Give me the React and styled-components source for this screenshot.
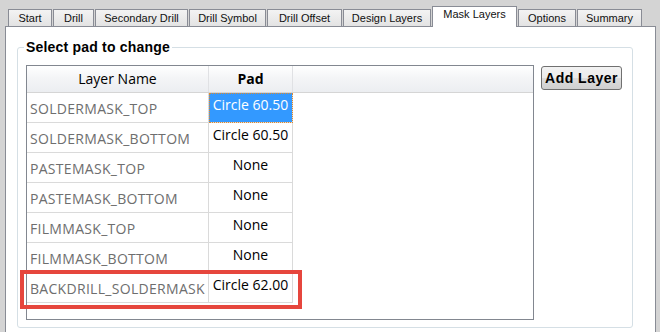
import styled, { createGlobalStyle } from 'styled-components';

const GlobalStyle = createGlobalStyle`
    html, body {
        margin: 0;
        padding: 0;
        background: #d4d4d4;
        overflow: hidden;
    }
`

const Window = styled.div`
    width: 660px;
    height: 332px;
    padding-top: 6px;
    box-sizing: border-box;
    font-family: "Liberation Sans", Arial, sans-serif;
`

const TabBar = styled.div`
    position: relative;
    z-index: 1;
    display: flex;
    align-items: flex-end;
    gap: 1px;
    height: 21px;
    padding-left: 8px;
`

const Tab = styled.div`
    box-sizing: border-box;
    width: ${props => props.w}px;
    height: ${props => props.active ? 21 : 17}px;
    margin-bottom: ${props => props.active ? 0 : 1}px;
    border: 1px solid #898c95;
    border-bottom: none;
    background: ${props => props.active ? '#ffffff' : 'linear-gradient(#f3f3f3, #e3e3e3)'};
    color: #111;
    font-size: 11px;
    text-align: center;
    line-height: ${props => props.active ? 15 : 16}px;
    white-space: nowrap;
`

const Panel = styled.div`
    box-sizing: border-box;
    margin: -1px 0 0 5px;
    width: 651px;
    height: 320px;
    border: 1px solid #898c95;
    background: #fff;
    padding: 11px 0 0 11px;
`

const Group = styled.fieldset`
    box-sizing: border-box;
    margin: 0;
    width: 616px;
    height: 290px;
    border: 1px solid #d5dfe5;
    border-radius: 3px;
    padding: 9px 0 0 8px;
`

const Title = styled.legend`
    padding: 0 2px;
    margin-left: -2px;
    font-size: 14px;
    letter-spacing: 0.2px;
    line-height: 18px;
    font-weight: bold;
    color: #000;
`

const Content = styled.div`
    display: flex;
    align-items: flex-start;
    gap: 7px;
`

const Table = styled.div`
    box-sizing: border-box;
    width: 508px;
    height: 255px;
    border: 1px solid #828790;
    font-family: "Open Sans", sans-serif;
    font-size: 14px;
`

const HeadRow = styled.div`
    display: flex;
    height: 27px;
    box-sizing: border-box;
    border-bottom: 1px solid #d5d5d5;
    background: linear-gradient(#ffffff, #f4f5f7 45%, #eceef1);
`

const HeadCell = styled.div`
    box-sizing: border-box;
    width: ${props => props.w}px;
    border-right: 1px solid #e0e1e4;
    text-align: center;
    line-height: 25px;
    font-weight: ${props => props.bold ? 700 : 400};
    color: #000;
`

const Row = styled.div`
    position: relative;
    display: flex;
    height: 30px;
`

const NameCell = styled.div`
    box-sizing: border-box;
    width: 182px;
    border-right: 1px solid #dadada;
    border-bottom: 1px solid #dadada;
    padding: 2px 0 0 3px;
    line-height: 27px;
    letter-spacing: 0.3px;
    color: #6e6e6e;
    white-space: nowrap;
    overflow: hidden;
`

const PadCell = styled.div`
    box-sizing: border-box;
    width: 84px;
    border-right: 1px solid #dadada;
    border-bottom: 1px solid #dadada;
    padding-top: 2px;
    line-height: 19px;
    text-align: center;
    white-space: nowrap;
    color: ${props => props.selected ? '#fff' : '#000'};
    background: ${props => props.selected ? '#3399ff' : 'transparent'};
    outline: ${props => props.selected ? '1px dotted #e08a2c' : 'none'};
    outline-offset: -1px;
`

const Highlight = styled.div`
    position: absolute;
    left: -7px;
    top: -3px;
    width: 282px;
    height: 39px;
    box-sizing: border-box;
    border: 4px solid #e6463d;
    pointer-events: none;
`

const Button = styled.button`
    box-sizing: border-box;
    margin-top: 1px;
    width: 81px;
    height: 24px;
    padding: 0;
    border: 1px solid #707070;
    border-radius: 3px;
    background: linear-gradient(#f2f2f2, #ebebeb 50%, #dddddd 51%, #cfcfcf);
    font-family: "Liberation Sans", Arial, sans-serif;
    font-size: 14px;
    letter-spacing: 0.5px;
    font-weight: bold;
    color: #000;
`

const tabs = [
    ['Start', 44],
    ['Drill', 41],
    ['Secondary Drill', 93],
    ['Drill Symbol', 77],
    ['Drill Offset', 75],
    ['Design Layers', 88],
    ['Mask Layers', 85],
    ['Options', 58],
    ['Summary', 65],
];

const layers = [
    ['SOLDERMASK_TOP', 'Circle 60.50'],
    ['SOLDERMASK_BOTTOM', 'Circle 60.50'],
    ['PASTEMASK_TOP', 'None'],
    ['PASTEMASK_BOTTOM', 'None'],
    ['FILMMASK_TOP', 'None'],
    ['FILMMASK_BOTTOM', 'None'],
    ['BACKDRILL_SOLDERMASK', 'Circle 62.00'],
];

const App = () => {
    return (
        <Window>
            <GlobalStyle />
            <TabBar>
                {tabs.map(([label, w]) => (
                    <Tab key={label} w={w} active={label === 'Mask Layers'}>{label}</Tab>
                ))}
            </TabBar>
            <Panel>
                <Group>
                    <Title>Select pad to change</Title>
                    <Content>
                        <Table>
                            <HeadRow>
                                <HeadCell w={182}>Layer Name</HeadCell>
                                <HeadCell w={84} bold>Pad</HeadCell>
                            </HeadRow>
                            {layers.map(([name, pad], i) => (
                                <Row key={name}>
                                    <NameCell>{name}</NameCell>
                                    <PadCell selected={i === 0}>{pad}</PadCell>
                                    {i === layers.length - 1 && <Highlight />}
                                </Row>
                            ))}
                        </Table>
                        <Button>Add Layer</Button>
                    </Content>
                </Group>
            </Panel>
        </Window>
    );
}

export default App;
